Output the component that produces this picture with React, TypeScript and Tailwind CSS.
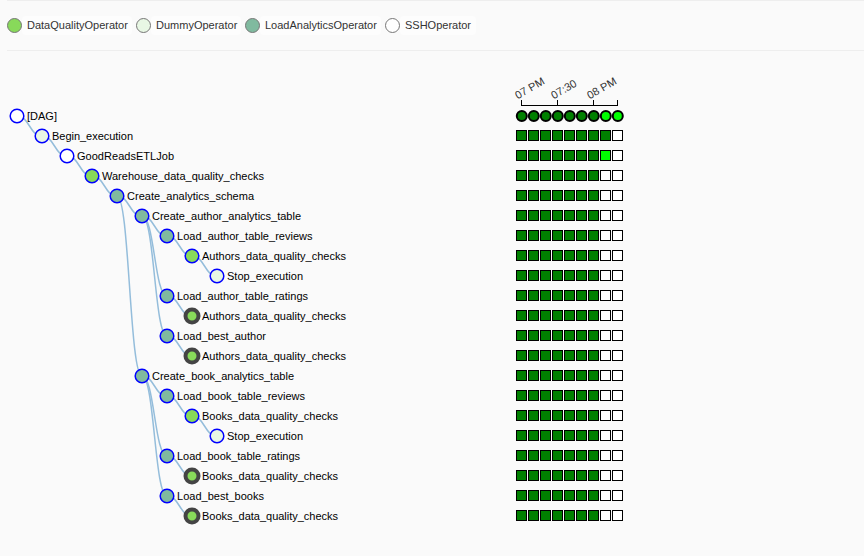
const GREEN = '#88d95a';
const MINT = '#e8f7e4';
const TEAL = '#80ba9f';
const WHITE = '#ffffff';

type Task = {
  name: string;
  depth: number;
  parent: number;
  color: string;
  collapsed?: boolean;
  width: number;
};

const tasks: Task[] = [
  { name: '[DAG]', depth: 0, parent: -1, color: WHITE, width: 30 },
  { name: 'Begin_execution', depth: 1, parent: 0, color: MINT, width: 81 },
  { name: 'GoodReadsETLJob', depth: 2, parent: 1, color: WHITE, width: 97 },
  { name: 'Warehouse_data_quality_checks', depth: 3, parent: 2, color: GREEN, width: 162 },
  { name: 'Create_analytics_schema', depth: 4, parent: 3, color: TEAL, width: 127 },
  { name: 'Create_author_analytics_table', depth: 5, parent: 4, color: TEAL, width: 149 },
  { name: 'Load_author_table_reviews', depth: 6, parent: 5, color: TEAL, width: 135.5 },
  { name: 'Authors_data_quality_checks', depth: 7, parent: 6, color: GREEN, width: 144 },
  { name: 'Stop_execution', depth: 8, parent: 7, color: MINT, width: 76 },
  { name: 'Load_author_table_ratings', depth: 6, parent: 5, color: TEAL, width: 131 },
  { name: 'Authors_data_quality_checks', depth: 7, parent: 9, color: GREEN, collapsed: true, width: 144 },
  { name: 'Load_best_author', depth: 6, parent: 5, color: TEAL, width: 89 },
  { name: 'Authors_data_quality_checks', depth: 7, parent: 11, color: GREEN, collapsed: true, width: 144 },
  { name: 'Create_book_analytics_table', depth: 5, parent: 4, color: TEAL, width: 142 },
  { name: 'Load_book_table_reviews', depth: 6, parent: 13, color: TEAL, width: 128 },
  { name: 'Books_data_quality_checks', depth: 7, parent: 14, color: GREEN, width: 136 },
  { name: 'Stop_execution', depth: 8, parent: 15, color: MINT, width: 76 },
  { name: 'Load_book_table_ratings', depth: 6, parent: 13, color: TEAL, width: 123 },
  { name: 'Books_data_quality_checks', depth: 7, parent: 17, color: GREEN, collapsed: true, width: 136 },
  { name: 'Load_best_books', depth: 6, parent: 13, color: TEAL, width: 87 },
  { name: 'Books_data_quality_checks', depth: 7, parent: 19, color: GREEN, collapsed: true, width: 136 },
];

const nodeX = (i: number) => 17 + tasks[i].depth * 25;
const nodeY = (i: number) => 65 + i * 20;
const runs = [0, 1, 2, 3, 4, 5, 6, 7, 8];

function runColor(row: number, run: number) {
  if (row === 0) return run < 7 ? '#008000' : '#00ff00';
  if (run < 7) return '#008000';
  if (run === 7 && row === 1) return '#008000';
  if (run === 7 && row === 2) return '#00ff00';
  return '#ffffff';
}

function link(i: number) {
  const p = tasks[i].parent;
  const mid = (nodeX(p) + nodeX(i)) / 2;
  return `M${nodeX(p)},${nodeY(p)}C${mid},${nodeY(p)} ${mid},${nodeY(i)} ${nodeX(i)},${nodeY(i)}`;
}

const operators = [
  { name: 'DataQualityOperator', dot: 'bg-[#88d95a]', label: 'w-[110px]' },
  { name: 'DummyOperator', dot: 'bg-[#e8f7e4]', label: 'w-[90px]' },
  { name: 'LoadAnalyticsOperator', dot: 'bg-[#80ba9f]', label: 'w-[121px]' },
  { name: 'SSHOperator', dot: 'bg-white', label: 'w-[76px]' },
];

function Legend() {
  return (
    <div className="ml-[7px] flex h-[51px] items-center border-y border-[#eeeeee]">
      {operators.map((op) => (
        <div key={op.name} className="flex items-center">
          <span className={`size-[15px] shrink-0 rounded-full border border-[#777777] ${op.dot}`} />
          <span
            className={`mr-[4px] h-[19px] rounded-[4px] bg-[#fdfdfd] pl-[5px] text-[11px] leading-[19px] whitespace-nowrap text-[#333333] ${op.label}`}
          >
            {op.name}
          </span>
        </div>
      ))}
    </div>
  );
}

const ticks = [
  { x: 521.5, label: '07 PM' },
  { x: 557.5, label: '07:30' },
  { x: 593.5, label: '08 PM' },
];

function TreeView() {
  return (
    <svg width="864" height="505" className="block text-[11px]">
      <path d="M521.5 49V54.5H617.5V49M557.5 49V54.5M593.5 49V54.5" fill="none" stroke="#000" shapeRendering="crispEdges" />
      {ticks.map((t) => (
        <text key={t.label} transform={`translate(${t.x - 3.7} 48.4) rotate(-30)`} fill="#333">
          {t.label}
        </text>
      ))}
      {tasks.map((t, i) =>
        t.parent < 0 ? null : <path key={i} d={link(i)} fill="none" stroke="#94bddb" strokeWidth="1.5" />,
      )}
      {tasks.map((t, i) => (
        <g key={i}>
          <circle
            cx={nodeX(i)}
            cy={nodeY(i)}
            r={t.collapsed ? 6.5 : 6.8}
            fill={t.color}
            stroke={t.collapsed ? '#444444' : '#0000ff'}
            strokeWidth={t.collapsed ? 4 : 1.5}
          />
          <text x={nodeX(i) + 10} y={nodeY(i) + 4} textLength={t.width} fill="#000">
            {t.name}
          </text>
          {runs.map((r) =>
            i === 0 ? (
              <circle key={r} cx={521.8 + r * 12} cy={nodeY(i)} r="5" fill={runColor(i, r)} stroke="#000" strokeWidth="2" />
            ) : (
              <rect
                key={r}
                x={516.5 + r * 12}
                y={nodeY(i) - 5.5}
                width="10"
                height="10"
                fill={runColor(i, r)}
                stroke="#000"
              />
            ),
          )}
        </g>
      ))}
    </svg>
  );
}

export default function App() {
  return (
    <main className="h-[556px] w-[864px] overflow-hidden bg-[#fafafa] font-['Liberation_Sans',Arial,sans-serif]">
      <Legend />
      <TreeView />
    </main>
  );
}
